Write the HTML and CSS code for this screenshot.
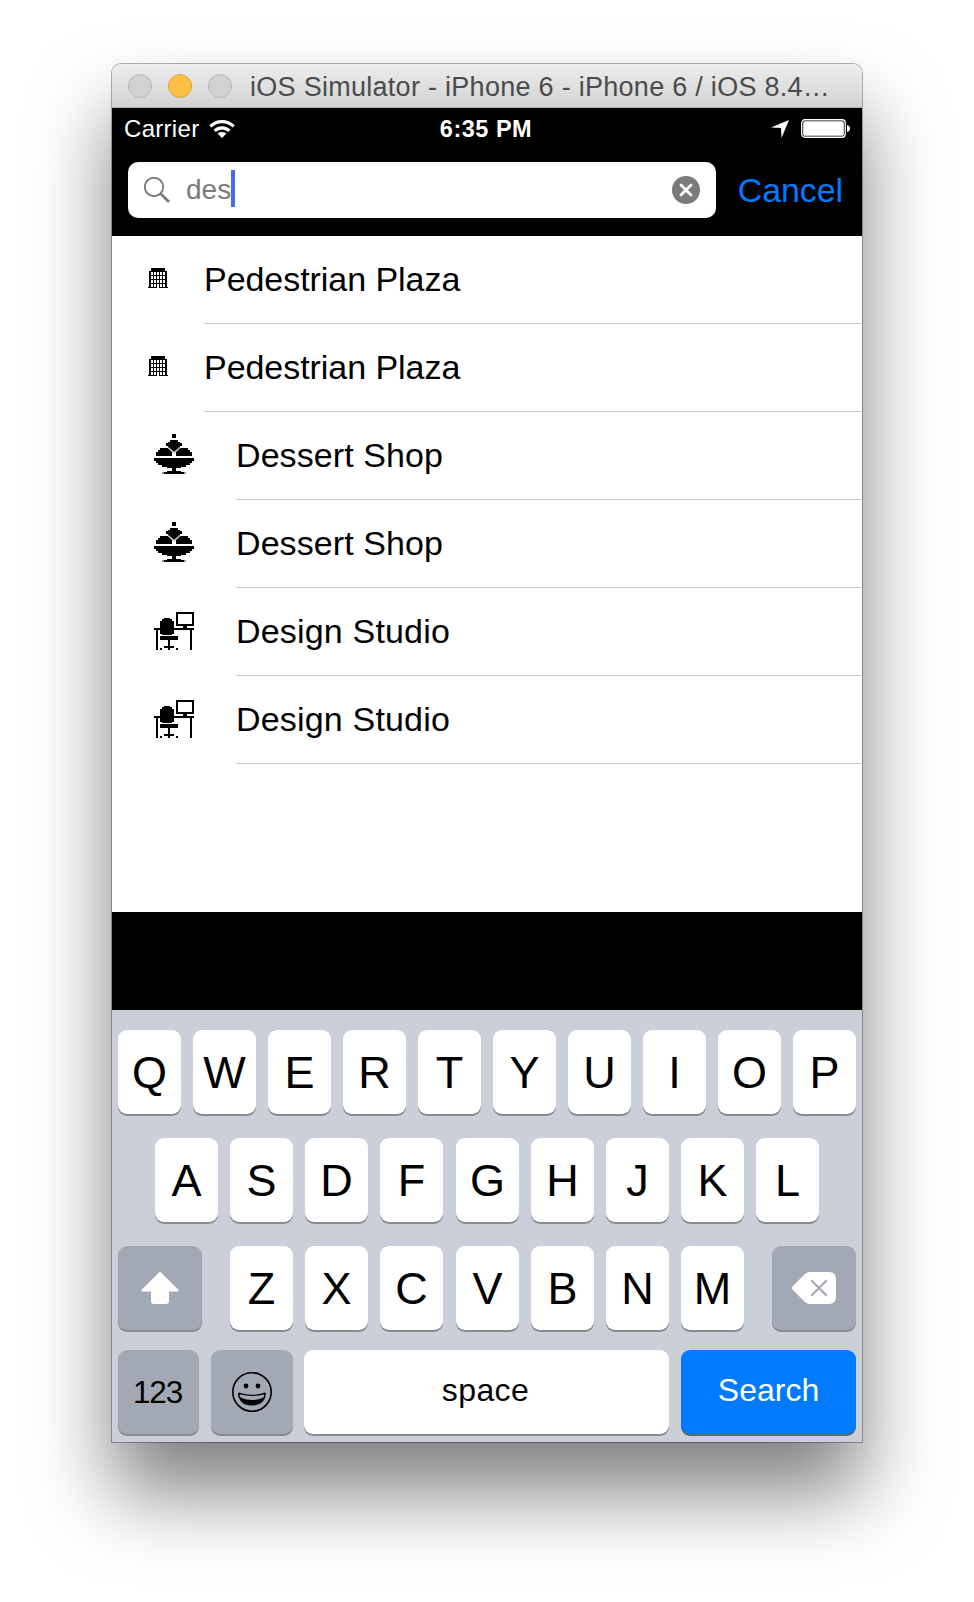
FILE: index.html
```html
<!DOCTYPE html>
<html lang="en">
<head>
<meta charset="utf-8">
<title>iOS Simulator</title>
<link rel="stylesheet" href="styles.css">
</head>
<body>
<svg class="defs" aria-hidden="true">
  <symbol id="building" viewBox="0 0 20 20">
    <path fill-rule="evenodd" d="M3 0h14v3h2v16h1v1H0v-1h1V3h2zM3 4h2v3H3zM6 4h2v3H6zM9 4h2v3H9zM12 4h2v3h-2zM15 4h2v3h-2zM3 8h2v3H3zM6 8h2v3H6zM9 8h2v3H9zM12 8h2v3h-2zM15 8h2v3h-2zM3 12h2v3H3zM6 12h2v3H6zM9 12h2v3H9zM12 12h2v3h-2zM15 12h2v3h-2zM3 16h2v3H3zM6 16h2v3H6zM9 16h2v4H9zM12 16h2v3h-2zM15 16h2v3h-2z"/>
  </symbol>
  <symbol id="dessert" viewBox="0 0 40 40">
    <path d="M18 0h4v4h-4zM16 6h8v2h2v1h2v3h-2v2h-2v2h-2v2h-4v-2h-2v-2h-2v-2h-2V9h2V8h2zM6 14h8l2 2 2 2v4H2v-4h2v-2h2zM26 14h8v2h2v2h2v4H22v-4l2-2zM0 24h40v3h-2v2h-2v2h-4v2h-5v1h-5v3h5v1h3v2H10v-2h3v-1h5v-3h-5v-1H8v-2H4v-2H2v-2H0z"/>
    <path fill="#999" d="M8 38h2v2H8zM30 38h2v2h-2z"/>
    <path fill="none" stroke="#bbb" stroke-width="1.500" d="m14 13.500 6 5 6-5"/>
  </symbol>
  <symbol id="desk" viewBox="0 0 40 40">
    <path fill-rule="evenodd" d="M22 0h18v14h-7v2h7v2h-2v20h-2V18H20v4h-2v1H8v-1H6v-4H4v20H2V18H0v-2h6V9h2V7h2V6h6v1h2v2h2v7h9v-2h-7zM24 2v10h14V2zM6 24h18v4h-8v6h4v2h-4v2h-2v-2h-4v-2h4v-6H6zM6 36h2v2H6zM22 36h2v2h-2z"/>
  </symbol>
</svg>

<main class="window">
  <header class="titlebar">
    <i class="light"></i><i class="light light-on"></i><i class="light"></i>
    <span class="title">iOS Simulator - iPhone 6 - iPhone 6 / iOS 8.4…</span>
  </header>

  <div class="status">
    <div class="status-left">
      <span class="carrier">Carrier</span>
      <svg class="wifi" viewBox="0 0 26 18"><path fill="none" stroke="#fff" stroke-width="3.2" d="M1.3 6.3Q6.3 1.6 13 1.6t11.7 4.7M5.6 10.8Q9 7.8 13 7.8t7.4 3"/><path fill="#fff" d="M8.5 13.4Q13 10.7 17.500 13.400L13 18z"/></svg>
    </div>
    <span class="time">6:35 PM</span>
    <div class="status-right">
      <svg class="location" viewBox="0 0 18 18"><path fill="#fff" d="M18 0 10.500 18 10 8 0 7.600z"/></svg>
      <svg class="battery" viewBox="0 0 50 19"><rect x=".75" y=".75" width="43.500" height="17.500" rx="3" fill="none" stroke="#fff" stroke-width="1.300"/><rect x="2.200" y="2.200" width="40.600" height="14.600" rx="1.500" fill="#fff"/><path fill="#fff" d="M46 6q3 1 3 3.500T46 13z"/></svg>
    </div>
  </div>

  <div class="searchbar">
    <div class="field">
      <svg class="magnifier" viewBox="0 0 26 26"><g fill="none" stroke="#7b7b7b"><circle cx="10" cy="10" r="9.200" stroke-width="1.900"/><path stroke-width="2.800" d="m16.700 16.700 8.300 8.300"/></g></svg>
      <span class="query">des</span><i class="caret"></i>
      <svg class="clear" viewBox="0 0 28 28"><circle cx="14" cy="14" r="14" fill="#7b7b7b"/><path stroke="#fff" stroke-width="2.800" stroke-linecap="round" d="m9 9 10 10M19 9 9 19"/></svg>
    </div>
    <span class="cancel">Cancel</span>
  </div>

  <ul class="results">
    <li class="row small"><svg><use href="#building"/></svg><span>Pedestrian Plaza</span></li>
    <li class="row small"><svg><use href="#building"/></svg><span>Pedestrian Plaza</span></li>
    <li class="row dessert"><svg><use href="#dessert"/></svg><span>Dessert Shop</span></li>
    <li class="row dessert"><svg><use href="#dessert"/></svg><span>Dessert Shop</span></li>
    <li class="row desk"><svg><use href="#desk"/></svg><span>Design Studio</span></li>
    <li class="row desk"><svg><use href="#desk"/></svg><span>Design Studio</span></li>
  </ul>

  <div class="strip"></div>

  <section class="keyboard">
    <div class="keys"><b>Q</b><b>W</b><b>E</b><b>R</b><b>T</b><b>Y</b><b>U</b><b>I</b><b>O</b><b>P</b></div>
    <div class="keys home"><b>A</b><b>S</b><b>D</b><b>F</b><b class="shifted">G</b><b>H</b><b>J</b><b>K</b><b>L</b></div>
    <div class="keys bottom">
      <b class="dark shift"><svg viewBox="0 0 38 32" width="38" height="32"><path fill="#fff" d="M18 .6q1-1 2 0L37.300 17.800q.8 1.700-.6 1.700H28V29q0 3-3 3H13q-3 0-3-3v-9.500H1.300q-1.400 0-.6-1.700z"/></svg></b>
      <b>Z</b><b>X</b><b>C</b><b class="shifted">V</b><b>B</b><b>N</b><b>M</b>
      <b class="dark delete"><svg viewBox="0 0 44 32" width="44" height="32"><path fill="#fff" d="M18 0h19q7 0 7 7v18q0 7-7 7H18q-3 0-5-2L1 18q-2-2 0-4L13 2q2-2 5-2z"/><path stroke="#a2a9b5" stroke-width="2.200" stroke-linecap="round" d="m20 9 14 14M34 9 20 23"/></svg></b>
    </div>
    <div class="keys last">
      <b class="dark numbers">123</b>
      <b class="dark emoji"><svg viewBox="0 0 40 40" width="40" height="40"><circle cx="20" cy="20" r="19.200" fill="none" stroke="#000" stroke-width="1.600"/><circle cx="14" cy="14" r="2.400"/><circle cx="26" cy="14" r="2.400"/><path d="M7 20.500q13 4.500 26 0 1 0 1 1.500-1.500 11.500-14 11.500T6 22q0-1.500 1-1.500z"/><path fill="#a2a9b5" d="M7.600 22.200q12.400 3.400 24.800 0-.1 1.500-1 3.300-11.400 5-22.800 0-.9-1.800-1-3.300z"/></svg></b>
      <b class="space">space</b>
      <b class="go">Search</b>
    </div>
  </section>
</main>
</body>
</html>
```
FILE: styles.css
```css
* { box-sizing: border-box; }
body {
  margin: 0;
  height: 1602px;
  padding: 64px 0 0 112px;
  background: #fff;
  font-family: "Liberation Sans", Arial, sans-serif;
  overflow: hidden;
}
.defs { position: absolute; width: 0; height: 0; }
svg { display: block; flex: none; }
.window {
  width: 750px;
  height: 1378px;
  display: flex;
  flex-direction: column;
  border-radius: 9px 9px 0 0;
  box-shadow: 0 0 0 1px rgba(0,0,0,.3), 0 50px 80px rgba(0,0,0,.5);
}
.titlebar {
  height: 44px;
  padding-left: 16px;
  display: flex;
  align-items: center;
  gap: 16px;
  border-radius: 9px 9px 0 0;
  border-bottom: 1px solid #b0b0b0;
  background: linear-gradient(#ededed, #d3d3d3);
}
.light { width: 24px; height: 24px; border-radius: 50%; background: #d2d2d2; border: 1px solid #b5b5b5; }
.light-on { background: #ffc145; border-color: #e2a13a; }
.title { margin-left: 2px; padding-top: 3px; font-size: 27px; letter-spacing: .28px; color: #4b4b4b; white-space: nowrap; }

.status {
  height: 42px;
  flex: none;
  background: #000;
  color: #fff;
  display: grid;
  grid-template-columns: 1fr auto 1fr;
  align-items: center;
  font-size: 24px;
  padding: 0 11px 0 12px;
}
.status-left, .status-right { display: flex; align-items: center; }
.status-left { gap: 10px; }
.status-right { justify-content: flex-end; gap: 12px; padding-bottom: 1px; }
.carrier { letter-spacing: .3px; }
.time { font-weight: 700; font-size: 23.500px; letter-spacing: .5px; margin-right: 3px; }
.wifi { width: 26px; height: 18px; margin-bottom: 1px; }
.location { width: 18px; height: 18px; }
.battery { width: 50px; height: 19px; }

.searchbar { height: 86px; flex: none; background: #000; padding: 12px 19px 0 16px; display: flex; justify-content: space-between; }
.field { width: 588px; height: 56px; border-radius: 10px; background: #fff; display: flex; align-items: center; padding: 0 16px; color: #7b7b7b; font-size: 28px; }
.magnifier { width: 26px; height: 26px; }
.query { margin-left: 16px; }
.caret { width: 4px; height: 37px; margin-bottom: 3px; background: #456cf0; }
.clear { width: 28px; height: 28px; margin-left: auto; }
.cancel { font-size: 34px; line-height: 57px; letter-spacing: -.1px; color: #007aff; }

.results { list-style: none; margin: 0; padding: 0; height: 676px; flex: none; background: #fff; }
.row { height: 88px; display: flex; font-size: 34px; line-height: 87px; }
.row span { flex: 1; border-bottom: 1px solid #c8c7cc; }
.row svg { width: 40px; height: 40px; margin: 22px 42px 0; }
.row.desk svg { margin-top: 24px; }
.row.desk { letter-spacing: .18px; }
.row.dessert { letter-spacing: .08px; }
.row.small svg { width: 20px; height: 20px; margin: 32px 36px 0; }
.row.small { letter-spacing: -.05px; }

.strip { height: 98px; flex: none; background: #000; }

.keyboard { height: 432px; flex: none; background: #cbcfd7; padding: 20px 6px 0; }
.keys { display: flex; gap: 12px; margin-bottom: 24px; }
.keys b {
  width: 63px;
  height: 84px;
  flex: none;
  display: flex;
  align-items: center;
  justify-content: center;
  padding-top: 2px;
  border-radius: 9px;
  background: #fff;
  box-shadow: 0 2px 0 #888b90;
  color: #000;
  font-size: 45px;
  font-weight: 400;
}
.keys .dark { background: #a2a9b5; padding-top: 0; }
.keys .shifted { margin-left: 1px; }
.home { padding-left: 37px; }
.bottom { margin-bottom: 20px; }
.keys .shift { width: 84px; margin-right: 16px; }
.keys .delete { width: 84px; margin-left: 16px; }
.keys .numbers { width: 81px; font-size: 31.500px; letter-spacing: -1.200px; padding-right: 2px; }
.keys .emoji { width: 82px; }
.keys .space { width: 365px; font-size: 32px; letter-spacing: .4px; margin-left: -1px; padding: 0 2px 3px 0; }
.keys .go { width: 175px; font-size: 32px; color: #fff; background: #007aff; padding: 0 0 4px; box-shadow: 0 2px 0 #5d6773; }
```
